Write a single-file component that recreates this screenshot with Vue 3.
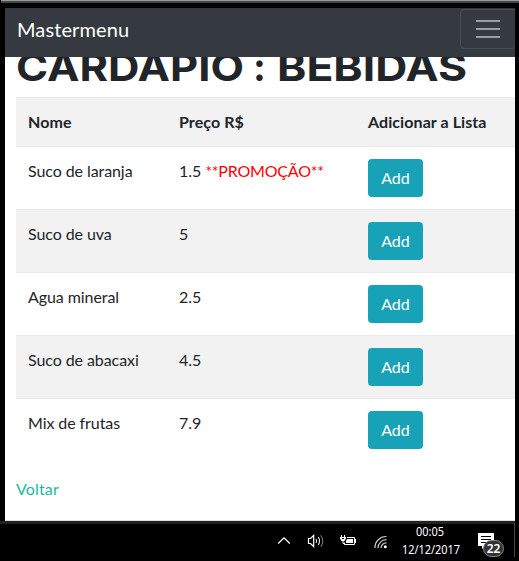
<script setup>
const drinks = [
  { name: 'Suco de laranja', price: '1.5', promo: true },
  { name: 'Suco de uva', price: '5' },
  { name: 'Agua mineral', price: '2.5' },
  { name: 'Suco de abacaxi', price: '4.5' },
  { name: 'Mix de frutas', price: '7.9' },
]
</script>

<template>
  <div class="screen">
    <div class="edge"></div>
    <div class="window">
      <nav class="navbar">
        <span class="brand">Mastermenu</span>
        <button class="toggler" aria-label="Menu">
          <svg width="24" height="19" viewBox="0 0 24 19">
            <path d="M0 1h24M0 9h24M0 17h24" stroke="#9a9da0" stroke-width="2" />
          </svg>
        </button>
      </nav>
      <main class="page">
        <h1 class="title">
          <svg width="499" height="40" viewBox="0 0 499 40">
            <text x="0" y="24" textLength="228" lengthAdjust="spacingAndGlyphs">CARDÁPIO</text>
            <text x="237" y="24">:</text>
            <text x="261" y="24" textLength="190" lengthAdjust="spacingAndGlyphs">BEBIDAS</text>
          </svg>
        </h1>
        <table class="table">
          <colgroup><col class="c-name" /><col class="c-price" /><col /></colgroup>
          <thead>
            <tr><th>Nome</th><th>Preço R$</th><th>Adicionar a Lista</th></tr>
          </thead>
          <tbody>
            <tr v-for="d in drinks" :key="d.name">
              <td>{{ d.name }}</td>
              <td>{{ d.price }} <span v-if="d.promo" class="promo">**PROMOÇÃO**</span></td>
              <td><button class="btn">Add</button></td>
            </tr>
          </tbody>
        </table>
        <a class="back">Voltar</a>
      </main>
    </div>
    <footer class="taskbar">
      <svg class="chevron" width="14" height="9" viewBox="0 0 14 9" fill="none">
        <path d="M1.2 7.5L7 1.8l5.8 5.7" stroke="#fff" stroke-width="1.3" />
      </svg>
      <svg class="volume" width="18" height="14" viewBox="0 0 18 14" fill="none">
        <path d="M1.5 4.5h2l3.2-3v11l-3.2-3h-2z" stroke="#fff" stroke-width="1.2" />
        <path d="M9 5q1.3 2 0 4M11.2 3q2.8 4 0 8" stroke="#eee" stroke-width="1.1" />
        <path d="M13.8 1.2q4 5.8 0 11.6" stroke="#777" stroke-width="1.1" />
      </svg>
      <svg class="battery" width="17" height="12" viewBox="0 0 17 12" fill="none">
        <path d="M7 2.5h7.5v7h-10V7.5M15.5 4v4" stroke="#fff" />
        <path d="M7 4h6v4H6V6z" fill="#fff" />
        <path d="M1.5 0v2M4.5 0v2M3 5v3.5h2" stroke="#fff" />
        <path d="M0 2h6v1.5L4.5 6h-3L0 3.5z" fill="#fff" />
        <path d="M2 3.5h2" stroke="#000" />
      </svg>
      <svg class="wifi" width="14" height="14" viewBox="0 0 14 14" fill="none">
        <path d="M1 13A11 11 0 0 1 12.5 1.5M4 13A8.3 8.3 0 0 1 12.5 4.7M7 13A5.3 5.3 0 0 1 12.5 7.8" stroke="#ccc" stroke-width="1.2" />
        <circle cx="11.3" cy="11.7" r="1.5" fill="#fff" />
      </svg>
      <div class="clock">
        <svg width="60" height="36" viewBox="0 0 60 36">
          <text x="15" y="12" textLength="28" lengthAdjust="spacingAndGlyphs">00:05</text>
          <text x="1" y="30" textLength="58" lengthAdjust="spacingAndGlyphs">12/12/2017</text>
        </svg>
      </div>
      <div class="notes">
        <svg width="16" height="16" viewBox="0 0 16 16">
          <path d="M0 0h16v13H7l-3 3v-3H0z" fill="#fff" />
          <path d="M3 3.5h10M3 6.5h10M3 9.5h10" stroke="#000" />
        </svg>
        <span class="badge">22</span>
      </div>
    </footer>
  </div>
</template>

<style>
body { margin: 0; background: #000; overflow: hidden; }
</style>

<style scoped>
.screen { box-sizing: border-box; width: 519px; height: 561px; background: #000; overflow: hidden; font-family: Lato, sans-serif; font-size: 16px; line-height: 24px; color: #212529; }
.edge { height: 3px; margin-left: 1px; box-sizing: border-box; border-top: 1px solid #9b9c98; background: #41484b; }
.window { box-sizing: border-box; width: 510px; height: 513px; margin: 5px 0 0 5px; background: #fff; overflow: hidden; border-bottom: 1px solid #dedede; }
.navbar { box-sizing: border-box; height: 49px; background: #343a40; display: flex; align-items: flex-start; justify-content: space-between; padding-left: 12px; }
.brand { color: #fff; font-size: 20px; line-height: 30px; padding-top: 6px; letter-spacing: 0.1px; }
.toggler { box-sizing: border-box; width: 56px; height: 40px; margin: 1px -1px 0 0; padding: 0; background: none; border: 1px solid #484e53; border-radius: 4px; display: flex; align-items: center; justify-content: center; }
.page { padding-left: 11px; }
.title { margin: 0; height: 40px; }
.title svg { display: block; }
.title text { font-family: Inter, sans-serif; font-weight: 700; font-size: 38.5px; fill: #212529; }
.table { width: 499px; border-collapse: collapse; table-layout: fixed; }
.c-name { width: 151px; }
.c-price { width: 189px; }
.table th, .table td { box-sizing: border-box; text-align: left; vertical-align: top; padding: 12px; border-top: 1px solid #e9ecef; }
.table th { height: 49px; font-weight: 700; letter-spacing: 0.08px; }
.table td { height: 63px; letter-spacing: -0.08px; }
.table thead tr, .table tbody tr:nth-child(even) { background: #f2f2f2; }
.promo { color: #f00; letter-spacing: -0.2px; }
.btn { display: block; box-sizing: border-box; width: 55px; height: 38px; padding: 0; border: 0; border-radius: 4px; background: #17a2b8; color: #fff; font: 16px/24px Lato, sans-serif; }
.back { display: block; color: #18bc9c; margin-top: 15px; letter-spacing: 0.15px; }
.taskbar { box-sizing: border-box; width: 515px; height: 36px; display: flex; border-top: 3px solid #222; border-right: 1px solid #444; }
.taskbar svg { display: block; flex: none; }
.chevron { margin: 12px 0 0 277px; }
.volume { margin: 10px 0 0 16px; }
.battery { margin: 11px 0 0 15px; }
.wifi { margin: 11px 0 0 17px; }
.clock { margin-left: 13px; }
.clock text { font-family: "Noto Sans", sans-serif; font-size: 12px; fill: #fff; }
.notes { position: relative; margin: 9px 0 0 17px; }
.badge { position: absolute; left: 5px; top: 7px; box-sizing: border-box; width: 21px; height: 17px; border: 1px solid #888; border-radius: 9px; background: #333; color: #fff; font: 600 12px/15px "Noto Sans", sans-serif; text-align: center; }
</style>
